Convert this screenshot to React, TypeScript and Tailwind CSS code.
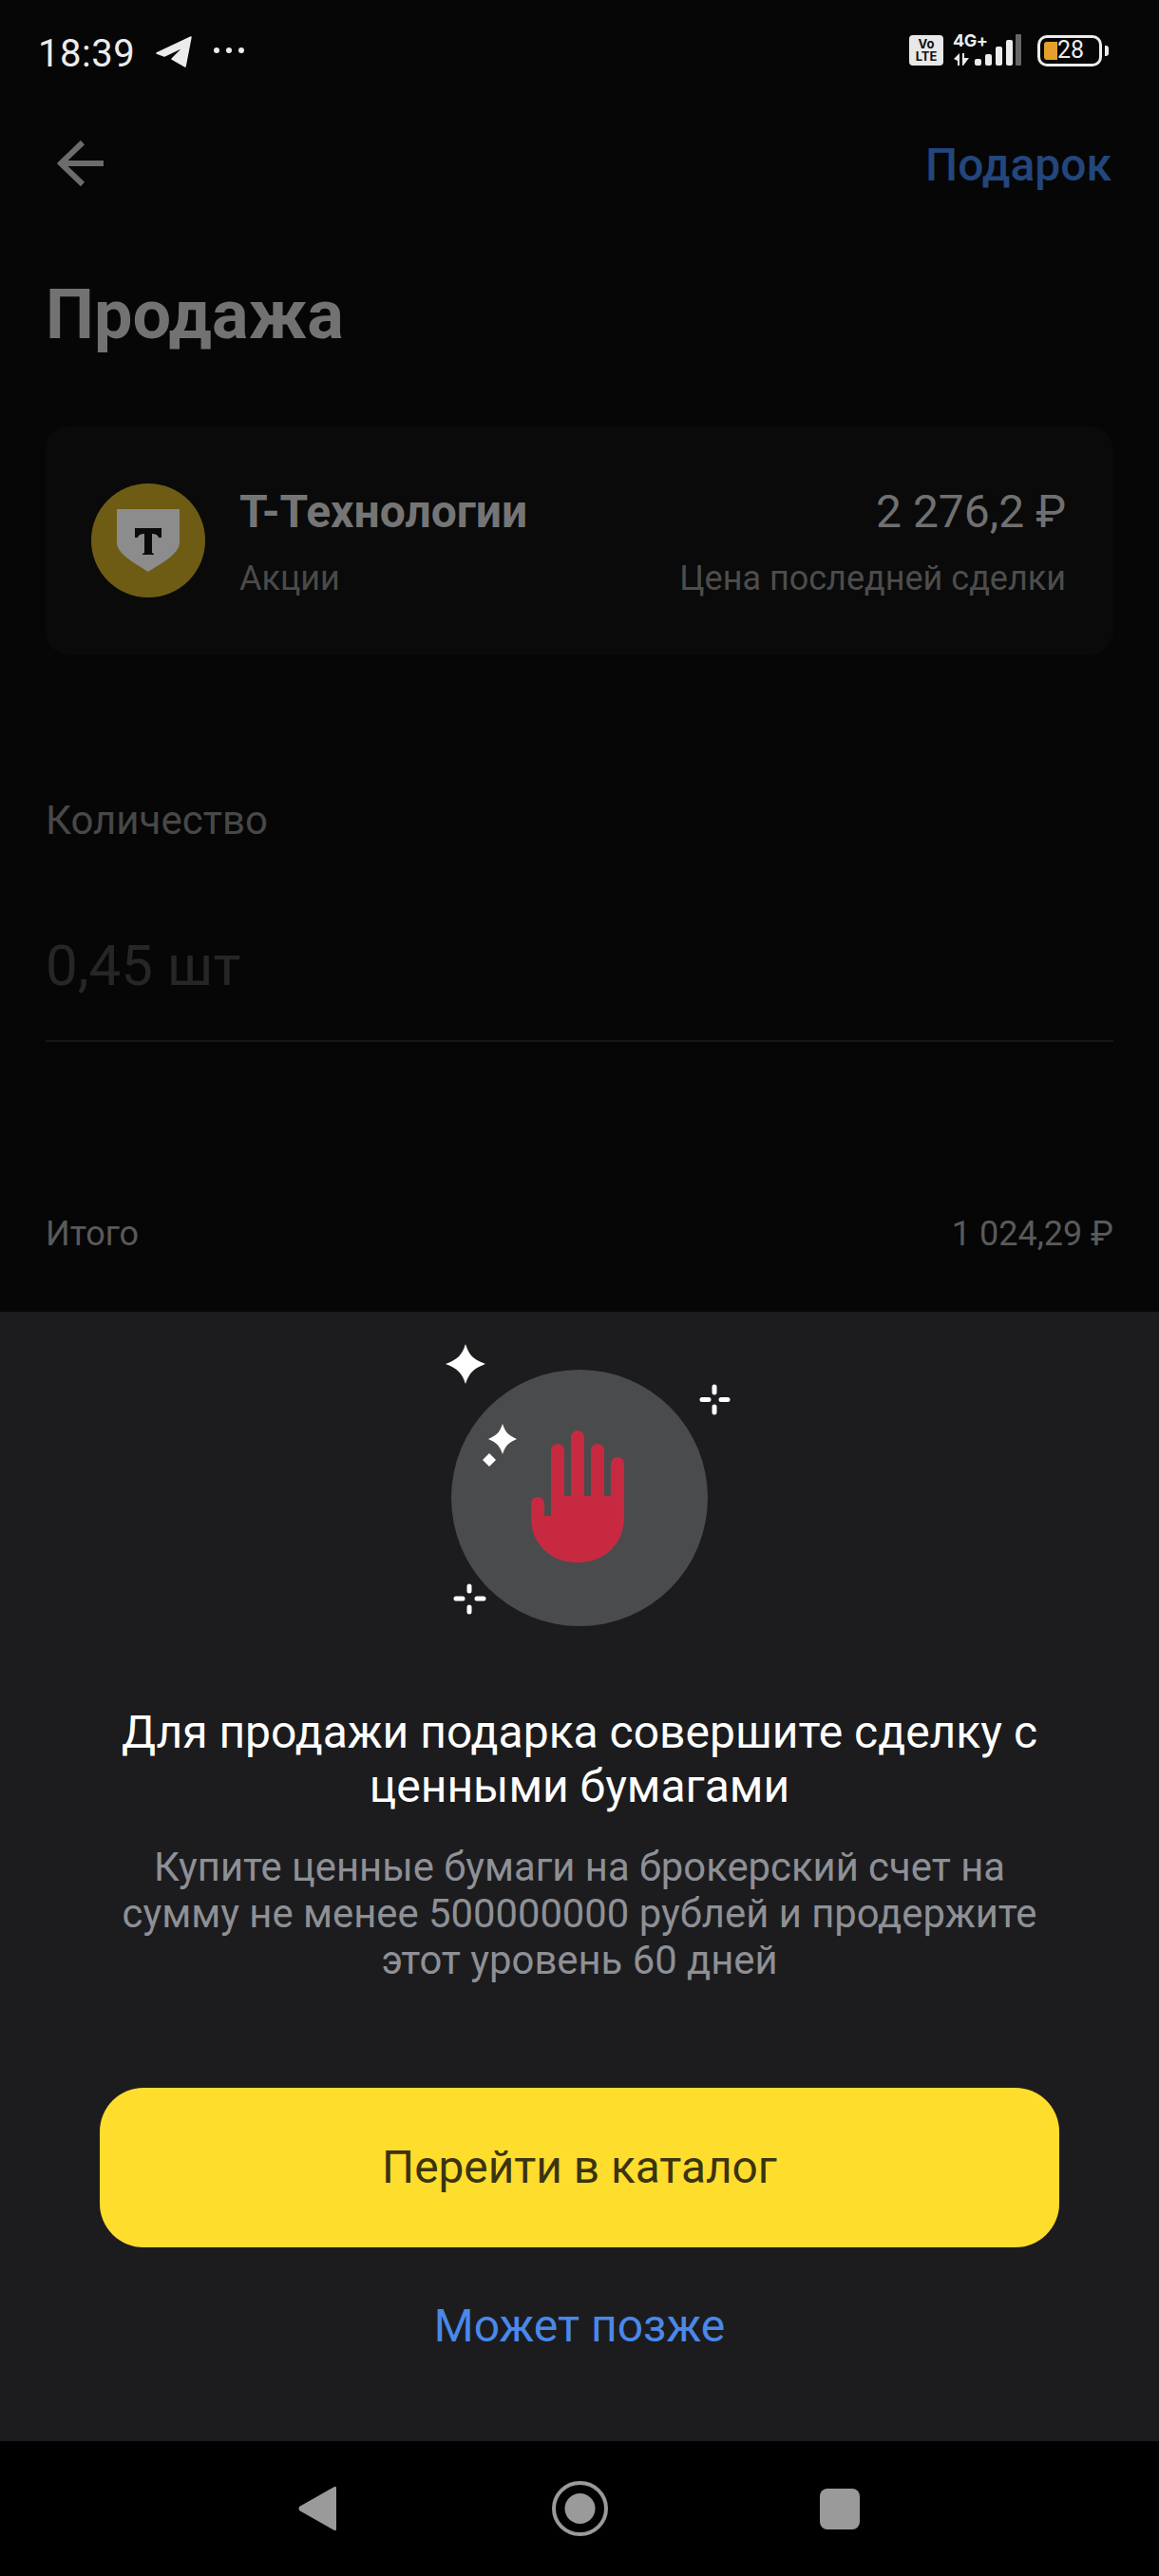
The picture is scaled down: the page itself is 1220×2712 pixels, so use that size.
export default function App() {
  return (
    <div className="w-[1220px] h-[2712px] flex flex-col overflow-hidden bg-black font-['Roboto',sans-serif]">
      <div className="h-[1381px] shrink-0 bg-[#060607] flex flex-col">
        {/* status bar */}
        <div className="h-[110px] shrink-0 flex items-start justify-between pt-[36px] pl-[40px] pr-[53px]">
          <div className="flex items-center h-[42px]">
            <span className="text-[40px] leading-[42px] text-[#ececec] tracking-[0.5px]">18:39</span>
            <svg className="ml-[22px] -mt-[6px]" width="38" height="33" viewBox="0 0 38 33">
              <path d="M37 1 L31 32 L17 24 L30 11 L9 21 L1 18 Z" fill="#ececec" stroke="#ececec" strokeWidth="1.5" strokeLinejoin="round" />
            </svg>
            <svg className="ml-[22px] -mt-[8px]" width="34" height="8" viewBox="0 0 34 8">
              <circle cx="4" cy="4" r="3" fill="#ececec" />
              <circle cx="17" cy="4" r="3" fill="#ececec" />
              <circle cx="30" cy="4" r="3" fill="#ececec" />
            </svg>
          </div>
          <div className="flex items-center h-[34px] font-['Inter',sans-serif]">
            <div className="w-[36px] h-[32px] rounded-[4px] bg-[#e8e8e8] flex flex-col items-center justify-center text-[#111] font-bold text-[13px] leading-[13px]">
              <span>Vo</span>
              <span>LTE</span>
            </div>
            <div className="ml-[10px] w-[72px] h-[34px] relative">
              <span className="absolute left-0 -top-[2px] text-[#ececec] font-bold text-[18px] leading-[18px] tracking-[-0.5px]">4G+</span>
              <svg className="absolute left-0 top-0" width="72" height="34" viewBox="0 0 72 34">
                <path d="M1 26 L7 20 V33 H5 V28 Z M10 33 V20 H12 V25 L17 25 L11 33 Z" fill="#ececec" />
                <rect x="23" y="26" width="7" height="7" rx="2" fill="#ececec" />
                <rect x="34" y="21" width="7" height="12" rx="2" fill="#ececec" />
                <rect x="45" y="13" width="7" height="20" rx="2" fill="#ececec" />
                <rect x="56" y="6" width="7" height="27" rx="2" fill="#ececec" />
                <rect x="66" y="0" width="6" height="33" rx="1" fill="#666" />
              </svg>
            </div>
            <div className="ml-[17px] w-[68px] h-[33px] rounded-[10px] border-[3px] border-[#ececec] flex items-center pl-[4px] relative">
              <div className="w-[14px] h-[19px] bg-[#e3a02c] rounded-l-[3px]" />
              <span className="text-[#ececec] text-[25px] leading-[24px] font-['Roboto',sans-serif]">28</span>
            </div>
            <div className="ml-[3px] w-[4px] h-[11px] rounded-r-[3px] bg-[#ececec]" />
          </div>
        </div>

        {/* app bar */}
        <div className="h-[124px] shrink-0 flex items-center justify-between pl-[60px] pr-[50px]">
          <svg width="50" height="50" viewBox="0 0 50 50" fill="none" stroke="#6c6c6c" strokeWidth="6">
            <path d="M49 25 H5 M27 3 L4 25 L27 47" />
          </svg>
          <span className="text-[48px] leading-[54px] font-medium text-[#23467c] mt-[4px]">Подарок</span>
        </div>

        <div className="px-[48px] flex flex-col">
          <h1 className="text-[72px] leading-[78px] font-bold text-[#727272] mt-[59px]">Продажа</h1>

          {/* card */}
          <div className="mt-[78px] h-[240px] rounded-[24px] bg-[#0a0a0a] flex items-center justify-between pl-[48px] pr-[50px]">
            <div className="flex items-center">
              <div className="w-[120px] h-[120px] rounded-full bg-[#6f5c14] flex items-center justify-center">
                <svg width="68" height="68" viewBox="0 0 68 68">
                  <path d="M1 1 H67 V36 C67 48 48 58 34 67 C20 58 1 48 1 36 Z" fill="#8c8c8c" />
                  <path d="M20 21 H48 V31 H45 C44 28 42 27 38 27 V47 L40 48 V49 H28 V48 L30 47 V27 C26 27 24 28 23 31 H20 Z" fill="#0b0b0b" />
                </svg>
              </div>
              <div className="ml-[36px] mt-[4px] flex flex-col">
                <span className="text-[48px] leading-[52px] font-bold text-[#757575]">Т-Технологии</span>
                <span className="mt-[24px] text-[36px] leading-[40px] text-[#4a4a4a]">Акции</span>
              </div>
            </div>
            <div className="mt-[4px] flex flex-col items-end">
              <span className="text-[48px] leading-[52px] text-[#707070]">2 276,2 ₽</span>
              <span className="mt-[24px] text-[36px] leading-[40px] text-[#4d4d4d]">Цена последней сделки</span>
            </div>
          </div>

          <div className="mt-[153px] text-[42px] leading-[44px] text-[#484848]">Количество</div>
          <div className="mt-[97px] text-[60px] leading-[68px] text-[#262626]">0,45 шт</div>
          <div className="mt-[44px] h-[2px] bg-[#161617]" />
          <div className="mt-[182px] flex items-center justify-between text-[36px] leading-[40px] text-[#5a5a5a]">
            <span>Итого</span>
            <span>1 024,29 ₽</span>
          </div>
        </div>
      </div>

      {/* sheet */}
      <div className="h-[1189px] shrink-0 bg-[#1c1c1e] flex flex-col items-center">
        <svg width="380" height="340" viewBox="0 0 380 340" className="shrink-0">
          <circle cx="190" cy="196" r="135" fill="#4a4b4d" />
          <path d="M70 34 C74 46 78 50 91 55 C78 60 74 64 70 76 C66 64 62 60 49 55 C62 50 66 46 70 34 Z" fill="#fff" />
          <path d="M109 118 C112 127 115 130 124 134 C115 138 112 141 109 150 C106 141 103 138 94 134 C103 130 106 127 109 118 Z" fill="#fff" />
          <path d="M95 149 L102 156 L95 163 L88 156 Z" fill="#fff" />
          <g stroke="#fff" strokeWidth="5" strokeLinecap="round">
            <path d="M332 79 V85 M332 100 V106 M319 92.5 H326 M339 92.5 H346" />
            <path d="M74 289 V294 M74 311 V316 M60 302 H67 M82 302 H89" />
          </g>
          <path d="M139 274 C139 282 139 215 139 202 A7 7 0 0 1 153 202 V215 H160 V146 A7 7 0 0 1 174 146 V194 H181 V132 A7 7 0 0 1 195 132 V194 H202 V146 A7 7 0 0 1 216 146 V194 H223 V160 A7 7 0 0 1 237 160 V216 C237 246 215 264 188 264 C161 264 139 246 139 216 Z" fill="#c72a40" />
        </svg>
        <div className="mt-[74px] text-[48px] leading-[57px] text-white text-center">
          Для продажи подарка совершите сделку с<br />ценными бумагами
        </div>
        <div className="mt-[32px] text-[41.8px] leading-[49px] text-[#8e9096] text-center">
          Купите ценные бумаги на брокерский счет на<br />сумму не менее 500000000 рублей и продержите<br />этот уровень 60 дней
        </div>
        <button className="mt-[110px] w-[1010px] h-[168px] rounded-[46px] bg-[#ffdd2d] text-[47.8px] leading-[52px] text-[#3a3410]">
          Перейти в каталог
        </button>
        <div className="mt-[56px] text-[48px] leading-[54px] text-[#4a88ea]">Может позже</div>
      </div>

      {/* nav */}
      <div className="flex-1 bg-black flex items-center pl-[314px]">
        <svg width="40" height="48" viewBox="0 0 40 48">
          <path d="M38 1 Q40 0 40 3 V45 Q40 48 38 47 L1 26 Q0 24 1 22 Z" fill="#9a9a9a" />
        </svg>
        <svg className="ml-[227px]" width="59" height="58" viewBox="0 0 59 58">
          <ellipse cx="29.5" cy="29" rx="27.5" ry="27" fill="none" stroke="#9a9a9a" strokeWidth="4" />
          <ellipse cx="29.5" cy="29" rx="16" ry="16" fill="#9a9a9a" />
        </svg>
        <div className="ml-[223px] w-[42px] h-[43px] rounded-[8px] bg-[#9a9a9a]" />
      </div>
    </div>
  );
}
